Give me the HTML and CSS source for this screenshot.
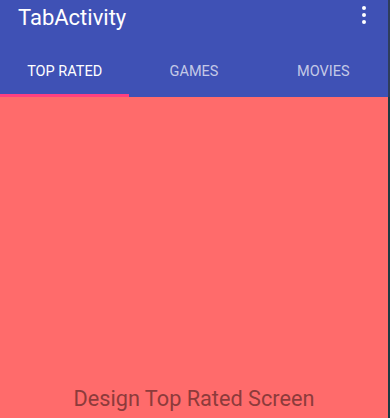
FILE: index.html
```html
<!DOCTYPE html>
<html>
<head>
<meta charset="utf-8">
<link rel="stylesheet" href="styles.css">
</head>
<body>
<div class="screen">
  <div class="app">
    <header class="appbar">
      <div class="toolbar">
        <span class="title">TabActivity</span>
        <svg class="overflow" width="4" height="18" viewBox="0 0 4 18">
          <circle cx="2" cy="2" r="2" fill="#fff"/>
          <circle cx="2" cy="9" r="2" fill="#fff"/>
          <circle cx="2" cy="16" r="2" fill="#fff"/>
        </svg>
      </div>
      <nav class="tabs">
        <div class="tab active">TOP RATED</div>
        <div class="tab">GAMES</div>
        <div class="tab">MOVIES</div>
      </nav>
    </header>
    <main class="content">
      <p class="label">Design Top Rated Screen</p>
    </main>
  </div>
  <div class="edge"></div>
</div>
</body>
</html>
```
FILE: styles.css
```css
html, body {
  margin: 0;
  padding: 0;
  height: 100%;
}
body {
  font-family: Roboto, "Liberation Sans", sans-serif;
  overflow: hidden;
}
.screen {
  display: flex;
  width: 390px;
  height: 418px;
}
.app {
  flex: 1;
  display: flex;
  flex-direction: column;
}
.edge {
  width: 2px;
  background: linear-gradient(#2e3d5c 0, #2e3d5c 97px, #1d3a42 97px);
}
.appbar {
  background: #3f51b5;
  height: 97px;
  display: flex;
  flex-direction: column;
}
.toolbar {
  height: 47px;
  display: flex;
  align-items: flex-start;
  justify-content: space-between;
  padding: 0 22px 0 18px;
}
.title {
  color: #fff;
  font-size: 22px;
  line-height: 35px;
}
.overflow {
  margin-top: 6px;
}
.tabs {
  flex: 1;
  display: flex;
}
.tab {
  flex: 1;
  display: flex;
  align-items: center;
  justify-content: center;
  color: rgba(255, 255, 255, 0.7);
  font-size: 14.5px;
  padding-top: 1px;
  box-sizing: border-box;
  border-bottom: 3px solid transparent;
}
.tab.active {
  color: #fff;
  border-bottom-color: #ff4081;
}
.content {
  flex: 1;
  background: #ff6b6b;
  display: flex;
  align-items: flex-end;
  justify-content: center;
}
.label {
  margin: 0 0 6px;
  font-size: 21.7px;
  line-height: 26px;
  color: #8d3b3b;
}
```
